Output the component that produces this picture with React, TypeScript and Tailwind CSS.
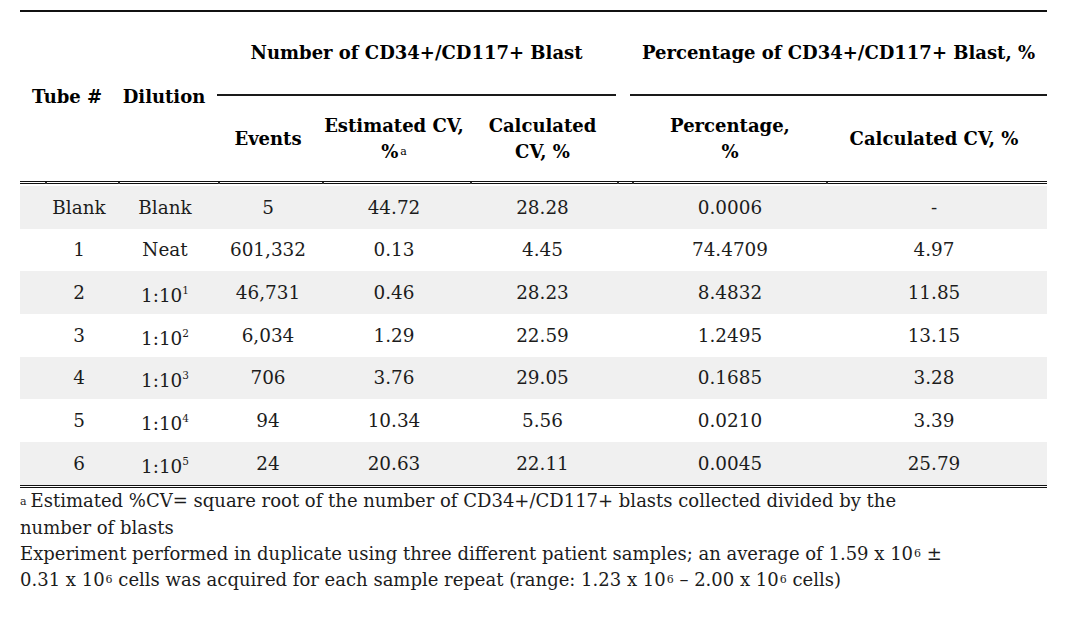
import React from 'react';

const cols = 'grid grid-cols-[118px_54px_25px_102px_150px_147px_14px_200px_208px_9px]';

// where each data value sits in the 10-track grid
const starts = [
  'col-start-1',
  'col-start-2',
  'col-start-4',
  'col-start-5',
  'col-start-6',
  'col-start-8',
  'col-start-9',
];

type RowData = { tube: string; dilution: string; exp?: string; values: string[] };

const rows: RowData[] = [
  { tube: 'Blank', dilution: 'Blank', values: ['5', '44.72', '28.28', '0.0006', '-'] },
  { tube: '1', dilution: 'Neat', values: ['601,332', '0.13', '4.45', '74.4709', '4.97'] },
  { tube: '2', dilution: '1:10', exp: '1', values: ['46,731', '0.46', '28.23', '8.4832', '11.85'] },
  { tube: '3', dilution: '1:10', exp: '2', values: ['6,034', '1.29', '22.59', '1.2495', '13.15'] },
  { tube: '4', dilution: '1:10', exp: '3', values: ['706', '3.76', '29.05', '0.1685', '3.28'] },
  { tube: '5', dilution: '1:10', exp: '4', values: ['94', '10.34', '5.56', '0.0210', '3.39'] },
  { tube: '6', dilution: '1:10', exp: '5', values: ['24', '20.63', '22.11', '0.0045', '25.79'] },
];

// little tick marks left under the header rule
const ticks = [45, 118, 218, 322, 470, 617, 632, 826];

const Small: React.FC<{ children: React.ReactNode }> = ({ children }) => (
  <span className="text-[11px] align-[3px] ml-[1px]">{children}</span>
);

const DataRow: React.FC<{ row: RowData; shaded: boolean }> = ({ row, shaded }) => {
  const cells = [row.tube, row.dilution, ...row.values];
  return (
    <div className={`${cols} h-[42.7px] ${shaded ? 'bg-[#f0f0f0]' : 'bg-white'}`}>
      {cells.map((text, i) => (
        <div
          key={i}
          className={`${starts[i]} row-start-1 flex items-center justify-center whitespace-nowrap`}
        >
          {i === 1 && row.exp ? (
            <span className="translate-y-[3px]">
              {text}
              <sup className="text-[10.5px] -top-[8px]">{row.exp}</sup>
            </span>
          ) : (
            text
          )}
        </div>
      ))}
    </div>
  );
};

export default function App() {
  return (
    <div
      className="w-[1080px] h-[618px] bg-white overflow-hidden text-[#1c1c1c]"
      style={{ fontFamily: '"DejaVu Serif", serif' }}
    >
      <div className="ml-[20px] w-[1027px] pt-[10px]">
        {/* Header */}
        <div className="relative border-t-2 border-b-[3px] border-double border-t-solid border-[#111] text-[18px] font-bold text-black">
          <div className={`${cols} grid-rows-[84px_85px]`}>
            <div className="col-start-1 row-start-1 row-span-2 flex items-center justify-center whitespace-nowrap pr-[24px]">
              Tube #
            </div>
            <div className="col-start-2 row-start-1 row-span-2 flex items-center justify-center whitespace-nowrap pr-[2px]">
              Dilution
            </div>
            <div className="col-start-4 col-span-3 row-start-1 flex items-center justify-center border-b-2 border-[#1a1a1a] whitespace-nowrap pb-[2px]">
              Number of CD34+/CD117+ Blast
            </div>
            <div className="col-start-8 col-span-3 row-start-1 flex items-center justify-center border-b-2 border-[#1a1a1a] whitespace-nowrap pb-[2px]">
              Percentage of CD34+/CD117+ Blast, %
            </div>
            <div className="col-start-4 row-start-2 flex items-center justify-center">Events</div>
            <div className="col-start-5 row-start-2 flex flex-col items-center justify-center leading-[26px] whitespace-nowrap">
              <span>Estimated CV,</span>
              <span>
                %<span className="text-[11px] font-normal align-[3px] ml-[2px]">a</span>
              </span>
            </div>
            <div className="col-start-6 row-start-2 flex flex-col items-center justify-center leading-[26px] whitespace-nowrap">
              <span>Calculated</span>
              <span>CV, %</span>
            </div>
            <div className="col-start-8 row-start-2 flex flex-col items-center justify-center leading-[26px] whitespace-nowrap">
              <span>Percentage,</span>
              <span>%</span>
            </div>
            <div className="col-start-9 row-start-2 flex items-center justify-center whitespace-nowrap">
              Calculated CV, %
            </div>
          </div>
          {ticks.map((x) => (
            <div
              key={x}
              className="absolute top-full mt-[1px] w-[2px] h-[2px] bg-[#333]"
              style={{ left: x - 20 }}
            />
          ))}
        </div>

        {/* Body */}
        <div className="mt-[2px] border-b-[3px] border-double border-[#111] text-[18.4px]">
          {rows.map((row, i) => (
            <DataRow key={i} row={row} shaded={i % 2 === 0} />
          ))}
        </div>

        {/* Notes */}
        <div className="text-[18px] leading-[26px] text-[#1c1c1c]">
          <p>
            <span className="text-[11px] align-[2px] mr-[4px]">a</span>Estimated %CV= square root of the
            number of CD34+/CD117+ blasts collected divided by the
            <br />
            number of blasts
          </p>
          <p>
            Experiment performed in duplicate using three different patient samples; an average of 1.59 x 10
            <Small>6</Small> ±
            <br />
            0.31 x 10<Small>6</Small> cells was acquired for each sample repeat (range: 1.23 x 10<Small>6</Small> –
            2.00 x 10<Small>6</Small> cells)
          </p>
        </div>
      </div>
    </div>
  );
}
